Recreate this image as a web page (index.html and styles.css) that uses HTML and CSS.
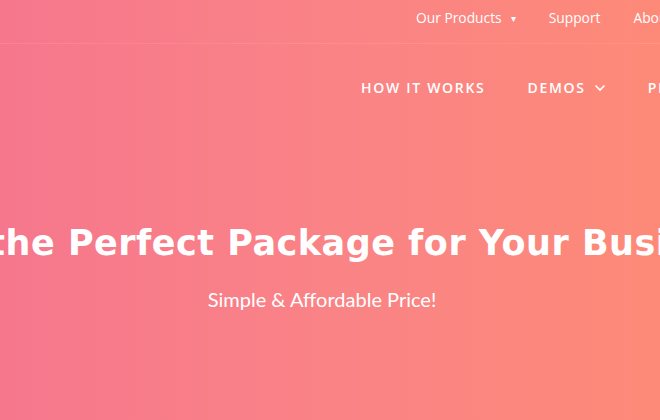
FILE: index.html
```html
<!DOCTYPE html>
<html lang="en">
<head>
<meta charset="utf-8">
<title>Pricing</title>
<link rel="stylesheet" href="styles.css">
</head>
<body>
<div class="page">
  <div class="topbar">
    <nav class="topnav">
      <a class="toplink">Our Products <span class="caret">&#9662;</span></a>
      <a class="toplink">Support</a>
      <a class="toplink">About Us</a>
    </nav>
  </div>
  <header class="mainbar">
    <nav class="mainnav">
      <a class="mainlink">HOW IT WORKS</a>
      <a class="mainlink">DEMOS <svg class="chev" width="12" height="8" viewBox="0 0 12 8"><path d="M1.5 1.5 L6 6 L10.5 1.5" fill="none" stroke="#fff" stroke-width="1.6"/></svg></a>
      <a class="mainlink">PRICING</a>
    </nav>
  </header>
  <section class="hero">
    <h1 class="title">Choose the Perfect Package for Your Business</h1>
    <p class="subtitle">Simple &amp; Affordable Price!</p>
  </section>
</div>
</body>
</html>
```
FILE: styles.css
```css
html, body {
  margin: 0;
  padding: 0;
  height: 100%;
  overflow: hidden;
}
body {
  background: linear-gradient(90deg, #f6778d 0%, #fa8386 50%, #fd8a78 100%);
  font-family: "Open Sans", "Liberation Sans", sans-serif;
  color: #fff;
}
.page {
  width: 660px;
  height: 420px;
}
.topbar {
  height: 35px;
  padding-bottom: 8px;
  border-bottom: 1px solid rgba(255, 255, 255, 0.09);
  display: flex;
  align-items: center;
}
.topnav {
  display: flex;
  gap: 33px;
  padding-left: 416px;
  white-space: nowrap;
  font-size: 13.8px;
}
.toplink {
  color: #fff;
  display: flex;
  align-items: center;
  gap: 9px;
}
.caret {
  font-size: 10px;
}
.mainbar {
  height: 86px;
  display: flex;
  align-items: center;
}
.mainnav {
  display: flex;
  gap: 42px;
  padding-left: 361px;
  white-space: nowrap;
  font-size: 14px;
  font-weight: 600;
  letter-spacing: 1.7px;
}
.mainlink {
  color: #fff;
  display: flex;
  align-items: center;
  gap: 8px;
}
.chev {
  margin-top: 1px;
}
.hero {
  display: flex;
  flex-direction: column;
  align-items: center;
  padding-top: 91px;
}
.title {
  margin: 0 70px 0 0;
  white-space: nowrap;
  font-family: "DejaVu Sans", "Open Sans", sans-serif;
  font-weight: bold;
  font-size: 35px;
  line-height: 44px;
  letter-spacing: 0.5px;
}
.subtitle {
  margin: 22px 16px 0 0;
  font-size: 20px;
  font-weight: 400;
  font-family: "Lato", "Open Sans", sans-serif;
}
```
